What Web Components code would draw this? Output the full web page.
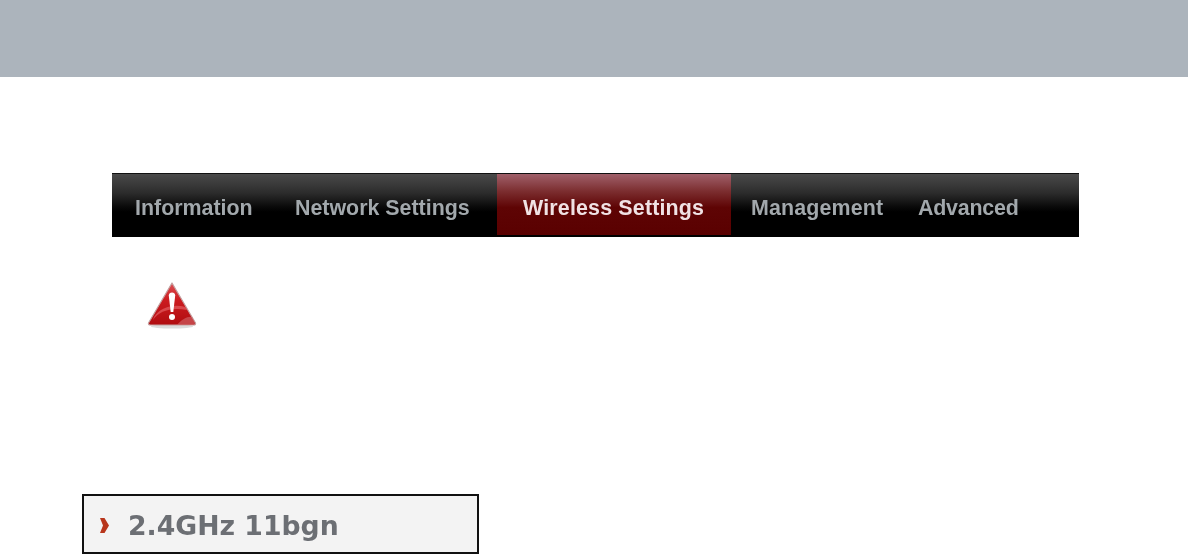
<!DOCTYPE html>
<html>
<head>
<meta charset="utf-8">
<title>Wireless Settings</title>
<style>
  html, body { margin: 0; padding: 0; background: #fff; }
  body { width: 1190px; height: 555px; overflow: hidden; font-family: "Liberation Sans", Arial, sans-serif; }
</style>
</head>
<body>
<manual-page>
  <nav-bar>
    <nav-item style="--w:183px;--pad:23px">Information</nav-item>
    <nav-item style="--w:202px;--pad:0px">Network Settings</nav-item>
    <nav-item active style="--w:234px;--pad:26px;--ls:.18px">Wireless Settings</nav-item>
    <nav-item style="--w:167px;--pad:20px;--ls:.15px">Management</nav-item>
    <nav-item style="--w:181px;--pad:20px;--ls:-.2px">Advanced</nav-item>
  </nav-bar>
  <warning-icon></warning-icon>
  <section-label>2.4GHz 11bgn</section-label>
</manual-page>

<script>
class ManualPage extends HTMLElement {
  constructor() {
    super()
    this.attachShadow({ mode: 'open' })
    this.shadowRoot.innerHTML = `<style>
      :host { display: flex; flex-direction: column; width: 1190px; height: 555px; }
      .banner { height: 77px; width: 1188px; background: #acb4bc; flex: none; }
      main { display: flex; flex-direction: column; align-items: flex-start; padding: 96px 0 0 82px; }
      ::slotted(nav-bar) { margin-left: 30px; }
      ::slotted(warning-icon) { margin: 45px 0 0 65px; }
      ::slotted(section-label) { margin-top: 165px; }
    </style>
    <div class="banner"></div>
    <main><slot></slot></main>`
  }
}

class NavBar extends HTMLElement {
  constructor() {
    super()
    this.attachShadow({ mode: 'open' })
    this.shadowRoot.innerHTML = `<style>
      :host {
        display: flex; width: 967px; height: 64px; box-sizing: border-box;
        border-top: 1px solid #111;
        background: linear-gradient(#4a4a4a 0, #2c2c2c 30%, #0a0a0a 52%, #000 60%, #000 100%);
      }
    </style><slot></slot>`
  }
}

class NavItem extends HTMLElement {
  constructor() {
    super()
    this.attachShadow({ mode: 'open' })
    this.shadowRoot.innerHTML = `<style>
      :host {
        display: flex; align-items: center; box-sizing: border-box;
        width: var(--w); padding-left: var(--pad); padding-top: 5px;
        font: bold 21.4px "Liberation Sans", Arial, sans-serif;
        letter-spacing: var(--ls, 0);
        color: #a2a8ac;
      }
      :host([active]) {
        color: #f0e2e4;
        margin-bottom: 2px; padding-top: 7px;
        background: linear-gradient(#a0606a 0, #7c2e30 28%, #5e0404 55%, #5a0000 100%);
      }
      span { filter: blur(0.7px); }
    </style><span><slot></slot></span>`
  }
}

class WarningIcon extends HTMLElement {
  constructor() {
    super()
    this.attachShadow({ mode: 'open' })
    this.shadowRoot.innerHTML = `<style>
      :host { display: block; width: 50px; height: 47px; }
      svg { display: block; filter: blur(0.4px); }
    </style>
    <svg width="50" height="47" viewBox="0 0 50 47">
      <defs>
        <linearGradient id="red" x1="0" y1="0" x2="0" y2="1">
          <stop offset="0" stop-color="#dc5054"/>
          <stop offset=".4" stop-color="#cc1c20"/>
          <stop offset="1" stop-color="#b00c10"/>
        </linearGradient>
      </defs>
      <ellipse cx="25" cy="44.500" rx="21" ry="2" fill="#dcdcdc"/>
      <path d="M25 1 L48.500 41 Q49 43 46.500 43 L3.500 43 Q1 43 1.500 41 Z" fill="url(#red)" stroke="#c4a0a0" stroke-width="1.200" stroke-linejoin="round"/>
      <path d="M6 38 C12 29 24 25 40 28 L38.500 25 C25 21.500 13 26 7 35 Z" fill="#e86a6e" opacity=".6"/>
      <path d="M30 43 C35 37 41 34 45 35 L48 41 Q48 43 46 43 Z" fill="#d06266" opacity=".65"/>
      <path d="M21.800 13.500 Q22 10.500 25 10.500 Q28 10.500 28.200 13.500 L26.300 30 L23.700 30 Z" fill="#fff"/>
      <circle cx="25" cy="35" r="3" fill="#fff"/>
    </svg>`
  }
}

class SectionLabel extends HTMLElement {
  constructor() {
    super()
    this.attachShadow({ mode: 'open' })
    this.shadowRoot.innerHTML = `<style>
      :host {
        display: flex; align-items: center; gap: 19px; box-sizing: border-box;
        width: 397px; height: 60px; padding: 2px 0 0 16px;
        border: 2px solid #111;
        background: #f3f3f3;
        font: bold 26.7px "DejaVu Sans", Verdana, sans-serif;
        color: #6c6f74;
      }
      svg { flex: none; filter: blur(0.4px); }
      span { filter: blur(0.7px); }
    </style>
    <svg width="9" height="17" viewBox="0 0 9 17">
      <path d="M0 1 L4.500 1 L9 8.500 L4.500 16 L0 16 L3 8.500 Z" fill="#b8361c"/>
    </svg>
    <span><slot></slot></span>`
  }
}

customElements.define('manual-page', ManualPage)
customElements.define('nav-bar', NavBar)
customElements.define('nav-item', NavItem)
customElements.define('warning-icon', WarningIcon)
customElements.define('section-label', SectionLabel)
</script>
</body>
</html>
